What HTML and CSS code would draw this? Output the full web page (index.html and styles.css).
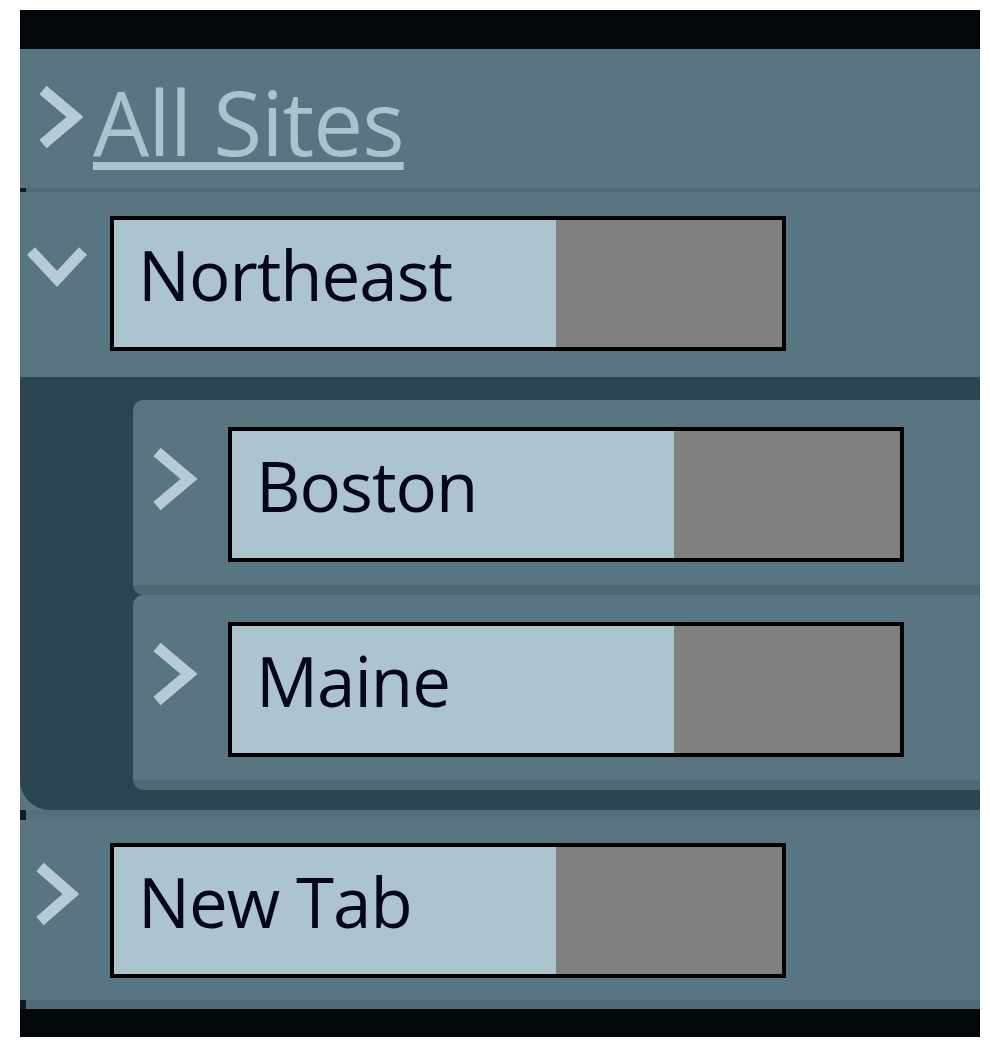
FILE: index.html
```html
<!DOCTYPE html>
<html lang="en">
<head>
<meta charset="utf-8">
<title>Sites</title>
<link rel="stylesheet" href="styles.css">
</head>
<body>
<div class="tree">
  <div class="bar bar-top"></div>

  <div class="root-row">
    <svg class="chev chev-root" viewBox="0 0 46 66" aria-hidden="true"><polyline points="6,6 38,33 6,60"/></svg>
    <a class="root-link" href="#">All Sites</a>
  </div>
  <div class="sep sep-thin"></div>

  <div class="node">
    <div class="node-head head-ne">
      <svg class="chev chev-down" viewBox="0 0 64 46" aria-hidden="true"><polyline points="6,8 32,36 58,8"/></svg>
      <div class="field"><span class="field-text">Northeast</span><span class="field-grey"></span></div>
    </div>
    <div class="children-wrap">
      <div class="children">
        <div class="card">
          <svg class="chev chev-card" viewBox="0 0 48 68" aria-hidden="true"><polyline points="7,7 39,34 7,61"/></svg>
          <div class="field"><span class="field-text">Boston</span><span class="field-grey"></span></div>
        </div>
        <div class="card">
          <svg class="chev chev-card" viewBox="0 0 48 68" aria-hidden="true"><polyline points="7,7 39,34 7,61"/></svg>
          <div class="field"><span class="field-text">Maine</span><span class="field-grey"></span></div>
        </div>
      </div>
    </div>
  </div>
  <div class="sep sep-mid"></div>

  <div class="node-head head-new">
    <svg class="chev chev-new" viewBox="0 0 46 68" aria-hidden="true"><polyline points="7,7 38,34 7,61"/></svg>
    <div class="field"><span class="field-text">New Tab</span><span class="field-grey"></span></div>
  </div>
  <div class="sep sep-bottom"></div>
  <div class="bar bar-bottom"></div>
</div>
</body>
</html>
```

FILE: styles.css
```css
html, body {
  margin: 0;
  padding: 0;
  background: #ffffff;
}

body {
  font-family: "Open Sans", "Noto Sans", sans-serif;
}

.tree {
  margin: 10px 10px 0 20px;
  width: 960px;
  background: #5a7582;
}

.bar {
  background: #02070b;
}
.bar-top { height: 39px; }
.bar-bottom { height: 28px; }

.sep {
  background: #4f6975;
  border-left: 6px solid #0d1c24;
  box-sizing: border-box;
}
.sep-thin { height: 4px; }
.sep-mid { height: 10px; background: #55707c; }
.sep-bottom { height: 9px; background: #506b77; }

.chev {
  display: block;
  flex: none;
  fill: none;
  stroke: #b7cbd4;
  stroke-width: 11;
  stroke-linecap: butt;
  stroke-linejoin: miter;
}

/* root row */
.root-row {
  height: 139px;
  display: flex;
  align-items: flex-start;
  box-sizing: border-box;
}
.chev-root {
  width: 46px;
  height: 66px;
  margin: 35px 0 0 17px;
}
.root-link {
  margin: 12px 0 0 10px;
  font-size: 89px;
  line-height: 122px;
  color: #a9c3cf;
  text-decoration: underline;
  text-decoration-thickness: 8px;
  text-underline-offset: 6px;
  letter-spacing: -1px;
}

/* node header rows */
.node-head {
  display: flex;
  align-items: flex-start;
  box-sizing: border-box;
}
.head-ne {
  height: 185px;
  padding-top: 24px;
}
.head-new {
  height: 180px;
  padding-top: 23px;
}
.chev-down {
  width: 64px;
  height: 46px;
  margin: 27px 21px 0 5px;
}
.chev-new {
  width: 46px;
  height: 68px;
  margin: 17px 31px 0 13px;
}

/* text field look */
.field {
  display: flex;
  width: 676px;
  height: 135px;
  box-sizing: border-box;
  border: 4px solid #000;
  background: #808080;
}
.field-text {
  width: 442px;
  box-sizing: border-box;
  background: #acc4ce;
  padding: 7px 0 0 24px;
  font-size: 69px;
  line-height: 94px;
  color: #05061a;
  letter-spacing: -1px;
  white-space: nowrap;
  overflow: hidden;
}
.field-grey {
  flex: 1;
  background: #808080;
}

/* children */
.children-wrap {
  background: #5a7582;
}
.children {
  background: #2b4451;
  border-bottom-left-radius: 30px;
  padding: 23px 0 20px 113px;
}
.card {
  display: flex;
  align-items: flex-start;
  height: 195px;
  box-sizing: border-box;
  padding-top: 27px;
  background: #5a7582;
  border-radius: 10px 0 0 10px;
  border-bottom: 10px solid #4e6874;
}
.chev-card {
  width: 48px;
  height: 68px;
  margin: 18px 30px 0 17px;
}
```
